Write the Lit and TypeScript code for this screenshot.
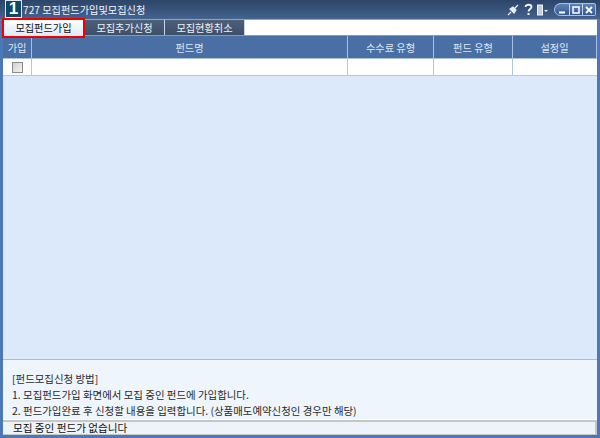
import { LitElement, html, css } from "lit";
import { customElement } from "lit/decorators.js";

@customElement("app-root")
export class AppRoot extends LitElement {
  static styles = css`
    :host { display: block; width: 600px; height: 438px; overflow: hidden; font-family: "Noto Sans CJK KR", "Liberation Sans", sans-serif; font-size: 10px; }
    .win { width: 600px; height: 438px; box-sizing: border-box; display: flex; flex-direction: column; background: #4a78b8; padding: 0 3px 3px 3px; position: relative; }
    .title { height: 19px; flex: none; display: flex; align-items: center; color: #f0f4fa; padding-left: 23px; margin: 0 -3px; font-size: 10.2px; background: linear-gradient(#2c4568, #45638f); }
    .title .t { flex: 1; }
    .logo { position: absolute; left: 5px; top: 0; width: 17px; height: 18px; background: #0f4766; border: 1px solid #dfe8f2; box-sizing: border-box; color: #fff; font: bold 17px/16px "Liberation Sans", sans-serif; text-align: center; }
    .ctl { display: flex; align-items: center; height: 19px; padding-right: 4px; }
    .ctl svg { display: block; flex: none; }
    .pin { margin-right: 5px; }
    .q { margin-right: 4px; }
    .doc { margin-right: 6px; }
    .btns { display: flex; height: 13px; background: #c2d4ea; border-radius: 7px 2px 2px 7px; overflow: hidden; gap: 1px; border: 1px solid #a9c0dd; box-sizing: border-box; width: 42px; }
    .btns span { flex: 12px 0 0; background: linear-gradient(#5f82b4, #34598f); display: flex; align-items: center; justify-content: center; }
    .btns span:first-child { flex: 1; }
    .tabs { height: 16px; flex: none; display: flex; background: #fff; border-top: 1px solid #8ea7c8; box-sizing: border-box; }
    .tab { width: 80px; height: 15px; display: flex; align-items: center; justify-content: center; color: #eef2f8; background: linear-gradient(#4d6079, #3d5069); border-right: 1px solid #c9d6e6; box-sizing: border-box; font-size: 10.2px; padding-bottom: 1px; }
    .tab.on { width: 83px; background: linear-gradient(#fff, #dfe9f6); color: #111; border: 2px solid #f00000; margin: -2px 0 -3px -1px; height: 20px; flex: none; position: relative; z-index: 1; padding-bottom: 1px; }
    .main { flex: 1; min-height: 0; background: #dce9fb; display: flex; flex-direction: column; }
    .grid { display: grid; grid-template-columns: 29px 316px 86px 79px 1fr; }
    .h { height: 24px; background: #4a6fa5; color: #dfe8f4; display: flex; align-items: center; justify-content: center; border-right: 1px solid #a9c0dd; border-top: 1px solid #7f9cc6; border-bottom: 1px solid #a9c0dd; box-sizing: border-box; font-size: 10.2px; padding-top: 1px; }
    .h:last-child { border-right: none; }
    .d { height: 17px; background: #fff; border-right: 1px solid #b5c8e2; border-bottom: 1px solid #b5c8e2; box-sizing: border-box; display: flex; align-items: center; justify-content: center; }
    .d:last-child { border-right: none; }
    .cb { width: 11px; height: 11px; border: 1px solid #8a8a8a; background: linear-gradient(135deg, #d0d0d0, #f4f4f4); box-sizing: border-box; }
    .spacer { flex: 1; }
    .info { height: 61px; flex: none; box-sizing: border-box; background: #eef5fd; border-top: 1px solid #a9bcd8; border-bottom: 1px solid #fff; color: #2a2a2a; padding-top: 11px; padding-left: 9px; line-height: 16px; font-size: 10.45px; }
    .info div { height: 16px; white-space: pre; }
    .status { height: 15px; flex: none; box-sizing: border-box; background: #eef3f9; border-top: 2px solid #c6c6c6; border-bottom: 1px solid #c6c6c6; border-right: 2px solid #c6c6c6; padding: 0 0 1px 10px; color: #111; display: flex; align-items: center; font-size: 10.6px; }
  `;
  render() {
    return html`<div class="win">
      <div class="title"><span class="t">727 모집펀드가입및모집신청</span>
        <div class="ctl">
          <svg class="pin" width="12" height="12" viewBox="0 0 12 12"><path d="M1 11L4 8M8 4L11 1M3 5L7 9L9 6L6 3Z" stroke="#e8eef6" stroke-width="1.2" fill="#e8eef6"/></svg>
          <svg class="q" width="9" height="13" viewBox="0 0 9 13"><path d="M1.5 4C1.5 1 7.5 1 7.5 4C7.5 6 4.5 6 4.5 8.5" stroke="#f2f5fa" stroke-width="1.8" fill="none"/><rect x="3.5" y="10" width="2" height="2" fill="#f2f5fa"/></svg>
          <svg class="doc" width="11" height="12" viewBox="0 0 11 12"><rect x="0.5" y="1" width="5" height="10" fill="#c5cedb" stroke="#eef2f8"/><path d="M7 6h4l-2 2z" fill="#eef2f8"/></svg>
          <div class="btns">
            <span><svg width="8" height="8" viewBox="0 0 8 8"><rect x="1" y="5.5" width="6" height="2" fill="#fff"/></svg></span>
            <span><svg width="8" height="8" viewBox="0 0 8 8"><rect x="1" y="1" width="6" height="6" fill="none" stroke="#fff" stroke-width="1.5"/></svg></span>
            <span><svg width="8" height="8" viewBox="0 0 8 8"><path d="M1 1L7 7M7 1L1 7" stroke="#fff" stroke-width="1.8"/></svg></span>
          </div>
        </div>
      </div>
      <div class="logo">1</div>
      <div class="tabs">
        <div class="tab on">모집펀드가입</div>
        <div class="tab">모집추가신청</div>
        <div class="tab">모집현황취소</div>
      </div>
      <div class="main">
        <div class="grid">
          <div class="h">가입</div><div class="h">펀드명</div><div class="h">수수료 유형</div><div class="h">펀드 유형</div><div class="h">설정일</div>
          <div class="d"><div class="cb"></div></div><div class="d"></div><div class="d"></div><div class="d"></div><div class="d"></div>
        </div>
        <div class="spacer"></div>
        <div class="info">
          <div>[펀드모집신청 방법]</div>
          <div>1. 모집펀드가입 화면에서 모집 중인 펀드에 가입합니다.</div>
          <div>2. 펀드가입완료 후 신청할 내용을 입력합니다. (상품매도예약신청인 경우만 해당)</div>
        </div>
        <div class="status">모집 중인 펀드가 없습니다</div>
      </div>
    </div>`;
  }
}
